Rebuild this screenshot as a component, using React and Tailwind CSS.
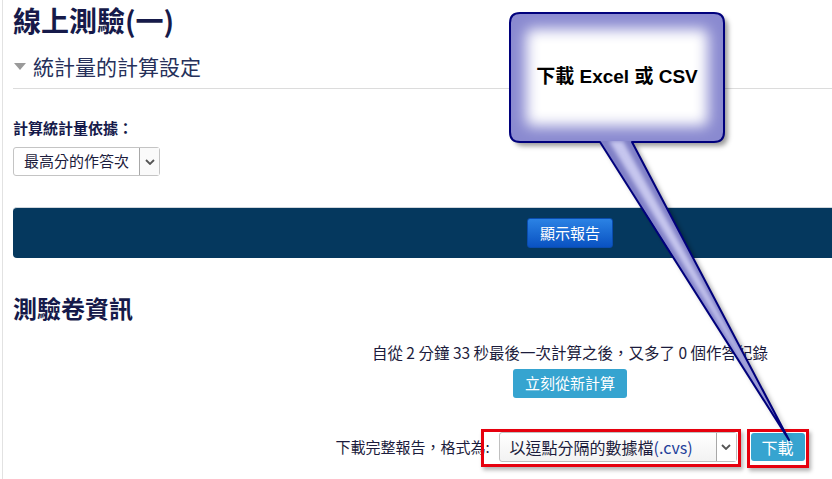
import React from "react";

const Chevron = () => (
  <svg width="10" height="6" viewBox="0 0 10 6">
    <path d="M1 1 L5 5 L9 1" fill="none" stroke="#555" strokeWidth="1.8" />
  </svg>
);

// callout drawn over the page
const Callout = () => (
  <div className="absolute left-0 top-0 w-[832px] h-[479px] pointer-events-none">
    <svg width="832" height="479" className="absolute left-0 top-0">
      <defs>
        <filter id="glow" x="-30%" y="-30%" width="160%" height="160%">
          <feGaussianBlur stdDeviation="7" />
        </filter>
        <filter id="soft" x="-30%" y="-30%" width="160%" height="160%">
          <feGaussianBlur stdDeviation="2.5" />
        </filter>
        <filter id="tailsoft" x="-30%" y="-30%" width="160%" height="160%">
          <feGaussianBlur stdDeviation="2" />
        </filter>
        <clipPath id="boxClip">
          <rect x="510" y="13" width="214" height="129" rx="10" />
        </clipPath>
        <clipPath id="tailClip">
          <polygon points="600,141 632,141 789,440" />
        </clipPath>
      </defs>
      <path
        d="M 520 13 H 714 Q 724 13 724 23 V 132 Q 724 142 714 142 H 632 L 789 440 L 600 142 H 520 Q 510 142 510 132 V 23 Q 510 13 520 13 Z"
        transform="translate(4 4)"
        fill="rgba(0,0,0,0.4)"
        filter="url(#soft)"
      />
      <g clipPath="url(#boxClip)">
        <rect x="510" y="13" width="214" height="129" fill="#8a8ad0" />
        <rect x="526" y="29" width="182" height="97" rx="6" fill="#fff" filter="url(#glow)" />
      </g>
      <g clipPath="url(#tailClip)">
        <polygon points="600,141 632,141 789,440" fill="#8080c6" />
        <polygon points="609,141 623,141 787,436" fill="#c6c6ee" filter="url(#tailsoft)" />
      </g>
      <path
        d="M 520 13 H 714 Q 724 13 724 23 V 132 Q 724 142 714 142 H 632 L 789 440 L 600 142 H 520 Q 510 142 510 132 V 23 Q 510 13 520 13 Z"
        fill="none"
        stroke="#00007c"
        strokeWidth="2"
        strokeLinejoin="round"
      />
    </svg>
    <div className="absolute left-[510px] top-[13px] w-[214px] h-[129px] flex items-center justify-center text-[19px] font-bold text-black font-['Liberation_Sans','Noto_Sans_CJK_TC',sans-serif]">
      下載 Excel 或 CSV
    </div>
  </div>
);

const App = () => {
  return (
    <div className="relative w-[832px] h-[479px] overflow-hidden bg-white font-['Noto_Sans_CJK_TC',sans-serif] text-[#1c1c3c]">
      <div className="ml-[2px] h-full border-l border-[#e2e2e2] pl-[10px]">
        <div className="w-[1114px]">
          <h1 className="h-[40px] leading-[40px] text-[28px] font-bold text-[#161a4a]">
            線上測驗(一)
          </h1>

          <div className="mt-[10px] h-[39px] pb-[6px] border-b border-[#dcdcdc] flex items-center">
            <svg width="12" height="7" viewBox="0 0 12 7" className="ml-[1px]">
              <polygon points="0,0 12,0 6,7" fill="#9a9a9a" />
            </svg>
            <span className="ml-[7px] text-[21px] leading-[32px] text-[#26305a]">統計量的計算設定</span>
          </div>

          <div className="mt-[29px] h-[20px] leading-[20px] text-[15px] font-bold text-[#161a4a]">
            計算統計量依據：
          </div>
          <div className="mt-[9px] w-[147px] h-[29px] flex border border-[#c4c4c4] rounded-[3px] bg-white">
            <div className="flex-1 flex items-center pl-[10px] text-[15px] text-[#1c1c3c]">最高分的作答次</div>
            <div className="w-[20px] flex items-center justify-center border-l border-[#a8a8a8] bg-[#fafafa]">
              <Chevron />
            </div>
          </div>

          <div className="mt-[31px] h-[51px] rounded-l-[4px] border-t border-[#d0d6dc] bg-[#05385e] flex items-center justify-center">
            <button className="w-[86px] h-[30px] rounded-[3px] border border-[#0a4cae] bg-gradient-to-b from-[#2b82e4] to-[#0a52c2] text-white text-[15px]">
              顯示報告
            </button>
          </div>

          <h2 className="mt-[34px] h-[32px] leading-[32px] text-[24px] font-bold text-[#161a4a]">測驗卷資訊</h2>

          <div className="mt-[18px] h-[20px] leading-[20px] text-[15.5px] text-center">
            自從 2 分鐘 33 秒最後一次計算之後，又多了 0 個作答紀錄
          </div>
          <div className="mt-[7px] flex justify-center">
            <button className="w-[114px] h-[29px] rounded-[3px] bg-[#36a4d0] text-white text-[15px]">
              立刻從新計算
            </button>
          </div>

          <div className="mt-[34px] h-[30px] flex items-center justify-center">
            <span className="text-[15px]">下載完整報告，格式為:</span>
            <div className="relative ml-[9px] w-[238px] h-[30px] flex border border-[#c0c0c0] rounded-[3px] bg-gradient-to-b from-white to-[#f2f2f2]">
              <div className="flex-1 flex items-center pl-[10px] text-[16px] text-[#1c1c3c]">
                以逗點分隔的數據檔<span className="text-[#23409a]">(.cvs)</span>
              </div>
              <div className="w-[20px] flex items-center justify-center border-l border-[#a8a8a8] bg-white">
                <Chevron />
              </div>
              <span className="absolute -left-[19px] -right-[5px] -top-[4px] -bottom-[6px] border-[3px] border-[#e6000e] shadow-[2px_3px_4px_rgba(0,0,0,0.3)]" />
            </div>
            <div className="relative ml-[14px]">
              <button className="w-[54px] h-[28px] rounded-[3px] bg-[#36a4d0] text-white text-[16px]">下載</button>
              <span className="absolute -left-[4px] -right-[4px] -top-[4px] -bottom-[7px] border-[3px] border-[#e6000e] shadow-[2px_3px_4px_rgba(0,0,0,0.3)]" />
            </div>
          </div>
        </div>
      </div>
      <Callout />
    </div>
  );
};

export default App;
